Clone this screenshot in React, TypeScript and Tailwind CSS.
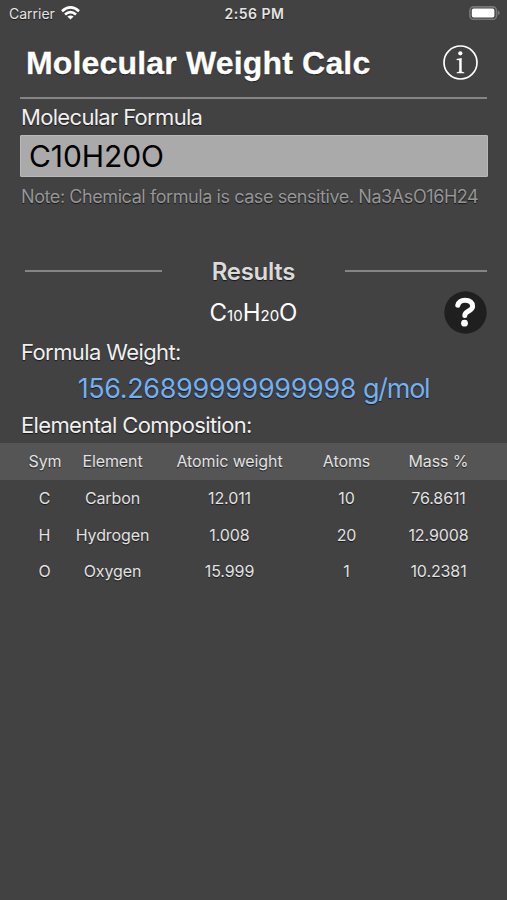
const rows = [
  ["C", "Carbon", "12.011", "10", "76.8611"],
  ["H", "Hydrogen", "1.008", "20", "12.9008"],
  ["O", "Oxygen", "15.999", "1", "10.2381"],
];

const columns = "grid grid-cols-[32px_104px_130px_104px_80px] items-center pb-px pl-[28.5px] text-center text-[16px] tracking-[-0.1px] whitespace-nowrap text-[#e2e2e2]";

function StatusBar() {
  return (
    <div className="grid h-7 grid-cols-3 items-center pb-[2px] pl-[9px] pr-[7px] text-[14px] text-[#e4e4e4]">
      <div className="flex items-center gap-[6px]">
        <span>Carrier</span>
        <svg width="19" height="14" viewBox="0 0 19 14" fill="none" stroke="#fff" strokeWidth="2.6">
          <path d="M1 5.2Q9.5 -2.4 18 5.2" />
          <path d="M4 8.6Q9.5 3.8 15 8.6" />
          <path d="M9.5 13.6L6.4 10.6Q9.5 8.2 12.6 10.6Z" fill="#fff" stroke="none" />
        </svg>
      </div>
      <span className="text-center font-semibold tracking-[0.5px] whitespace-nowrap">2:56 PM</span>
      <svg className="justify-self-end" width="31" height="14" viewBox="0 0 31 14">
        <rect x="0.9" y="0.9" width="26.6" height="12.4" rx="3.6" fill="none" stroke="#777" strokeWidth="1.6" />
        <rect x="2.8" y="2.6" width="22.6" height="9" rx="1.8" fill="#fff" />
        <path d="M28.8 4.6Q30.8 5.5 30.8 7T28.8 9.4Z" fill="#777" />
      </svg>
    </div>
  );
}

export default function App() {
  return (
    <div className="flex h-[900px] w-[507px] flex-col overflow-hidden bg-[#424242] font-['Inter',sans-serif] text-[#f0f0f0] [text-shadow:0_1px_1px_rgba(0,0,0,.65)]">
      <StatusBar />
      <header className="ml-[20px] mr-[20px] flex h-[71px] items-center justify-between border-b-2 border-[#858585] pl-[6px] pr-[9px]">
        <h1 className="font-['Liberation_Sans',sans-serif] text-[32px] font-bold tracking-[0.17px] whitespace-nowrap text-white [-webkit-text-stroke:0.3px_white]">
          Molecular Weight Calc
        </h1>
        <svg width="36" height="36" viewBox="0 0 36 36">
          <circle cx="18.5" cy="17.5" r="16.5" fill="none" stroke="#fff" strokeWidth="1.7" />
          <circle cx="18.3" cy="8.3" r="2.1" fill="#fff" />
          <path d="M14.6 13.9L19.7 12.9V26.5L22.3 27.4V28.2H14.6V27.4L17.2 26.5V15.3L14.6 14.9Z" fill="#fff" />
        </svg>
      </header>
      <label className="ml-[21px] flex h-9 items-center text-[22px] tracking-[-0.68px]">Molecular Formula</label>
      <div className="ml-[20px] mr-[19px] flex h-[42px] items-center rounded-[1px] border border-[#b8b8b8] bg-[#aaa] pl-2 text-[30px] tracking-[-0.1px] text-black [text-shadow:none]">
        C10H20O
      </div>
      <p className="ml-[21px] flex h-10 items-center pb-[2px] text-[18px] tracking-[-0.42px] whitespace-nowrap text-[#969696]">
        Note: Chemical formula is case sensitive. Na3AsO16H24
      </p>
      <div className="mt-[34px] ml-[25px] mr-[20px] flex h-10 items-center justify-between">
        <div className="h-[2px] w-[137px] bg-[#858585]" />
        <h2 className="pt-[2px] text-[24px] font-semibold tracking-[-0.3px] text-[#dadada]">Results</h2>
        <div className="h-[2px] w-[142px] bg-[#858585]" />
      </div>
      <div className="grid h-[42px] grid-cols-[1fr_auto_1fr] items-center pr-[20px] pl-[20px] text-white">
        <div />
        <div className="flex items-baseline text-[24px] [text-shadow:none]">
          C<span className="text-[15px]">10</span>H<span className="text-[15px]">20</span>O
        </div>
        <svg className="justify-self-end" width="43" height="43" viewBox="0 0 43 43">
          <circle cx="21.5" cy="21.5" r="21.2" fill="#1f1f1f" />
          <path d="M13.8 14.2C15 10 18 9.2 21 9.2C26 9.2 28.6 12 28.6 15.2C28.6 20.4 20.8 19.6 20.8 24.6" fill="none" stroke="#fff" strokeWidth="5" strokeLinecap="round" />
          <circle cx="20.5" cy="32.2" r="3.4" fill="#fff" />
        </svg>
      </div>
      <div className="ml-[21px] flex h-[38px] items-center text-[22px] tracking-[-0.6px]">Formula Weight:</div>
      <div className="flex h-[35px] items-center justify-center gap-[7px] pt-[2px] text-[27px] whitespace-nowrap text-[#75aff0]">
        <span className="tracking-[-0.37px]">156.26899999999998</span>
        <span className="tracking-[-1.3px]">g/mol</span>
      </div>
      <div className="ml-[21px] flex h-[37px] items-center pt-px text-[22px] tracking-[-0.64px]">Elemental Composition:</div>
      <div className={`${columns} h-[37px] bg-[#555]`}>
        {["Sym", "Element", "Atomic weight", "Atoms", "Mass %"].map((name) => (
          <span key={name}>{name}</span>
        ))}
      </div>
      {rows.map((row) => (
        <div key={row[0]} className={`${columns} h-[36.7px]`}>
          {row.map((cell, i) => (
            <span key={i}>{cell}</span>
          ))}
        </div>
      ))}
    </div>
  );
}
